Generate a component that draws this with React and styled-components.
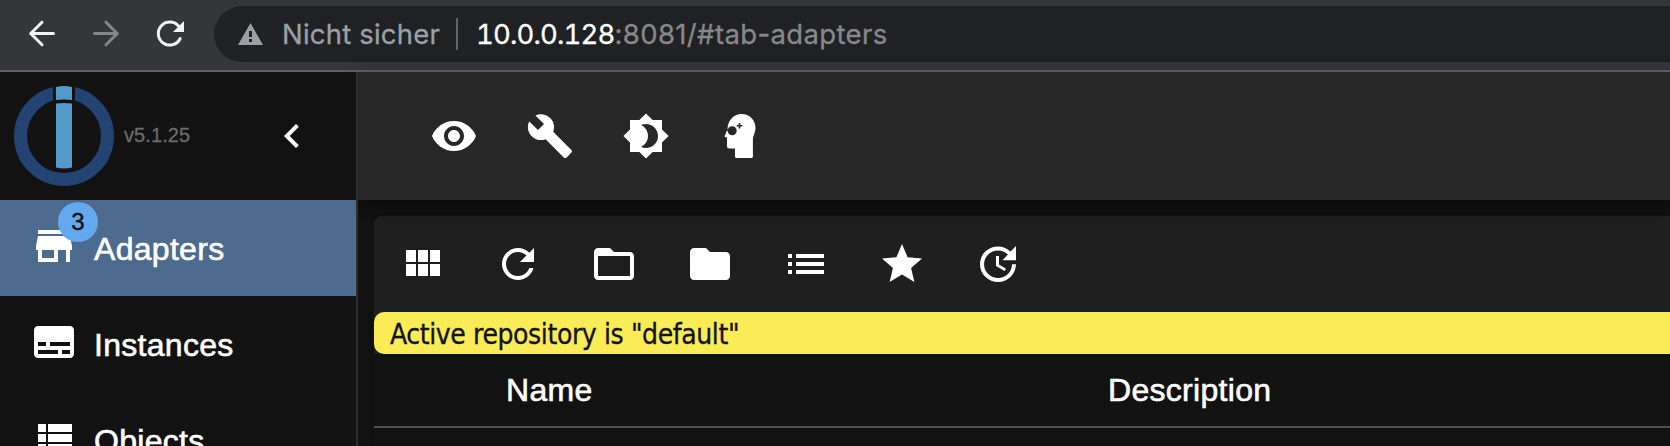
import React from "react";
import styled, { createGlobalStyle } from "styled-components";

const GlobalStyle = createGlobalStyle`
  * { box-sizing: border-box; }
  html, body { margin: 0; background: #121212; overflow: hidden; }
  body { font-family: "Liberation Sans", Arial, sans-serif; color: #fff; }
`;

const Page = styled.div`
  display: flex;
  flex-direction: column;
  width: 100%;
  height: 446px;
  overflow: hidden;
`;

const BrowserBar = styled.div`
  display: flex;
  flex: none;
  height: 72px;
  padding-top: 6px;
  background: #35363a;
  border-bottom: 2px solid #5f5f64;
`;

const NavButtons = styled.div`
  display: flex;
  align-items: center;
  width: 214px;
  height: 56px;
  padding-left: 22px;
  gap: 24px;
`;

const NavIcon = styled.svg`
  flex: none;
  width: 40px;
  height: 40px;
  fill: none;
  stroke: ${(p) => p.$color};
  stroke-width: 3;
  stroke-linecap: round;
  stroke-linejoin: round;
`;

const AddressBar = styled.div`
  display: flex;
  align-items: center;
  flex: 1;
  height: 56px;
  padding-left: 24px;
  border-radius: 28px 0 0 28px;
  background: #202124;
  font-family: Inter, sans-serif;
  font-size: 27.5px;
  color: #9aa0a6;
  white-space: nowrap;
`;

const WarningIcon = styled.svg`
  width: 25px;
  height: 22px;
  margin-right: 19px;
`;

const SecurityLabel = styled.span`
  width: 174px;
  letter-spacing: 0.2px;
  -webkit-text-stroke: 0.3px #9aa0a6;
`;

const Divider = styled.span`
  width: 2px;
  height: 32px;
  margin-right: 18px;
  background: #5f6367;
`;

const Url = styled.span`
  color: #87888a;
  letter-spacing: 0.37px;
  -webkit-text-stroke: 0.3px currentColor;
`;

const Host = styled.span`
  color: #fff;
  letter-spacing: -0.85px;
  font-variant-numeric: tabular-nums;
`;

const Body = styled.div`
  display: flex;
  flex: 1;
  min-height: 0;
`;

const Sidebar = styled.aside`
  position: relative;
  z-index: 1;
  flex: none;
  width: 358px;
  background: #121212;
  border-right: 2px solid #2e2e2e;
`;

const Brand = styled.div`
  display: flex;
  align-items: center;
  height: 128px;
  padding-left: 14px;
`;

const Logo = styled.svg`
  width: 100px;
  height: 100px;
`;

const Version = styled.span`
  width: 144px;
  margin: -1px 0 0 10px;
  font-size: 20px;
  letter-spacing: 0.1px;
  color: #6b6b6b;
  -webkit-text-stroke: 0.3px #6b6b6b;
`;

const MaterialSvg = styled.svg`
  flex: none;
  display: block;
  width: 48px;
  height: 48px;
  fill: #fff;
`;

const MenuItem = styled.div`
  display: flex;
  align-items: center;
  height: 96px;
  padding: 0 0 4px 30px;
  background: ${(p) => (p.$active ? "#4d6b8f" : "transparent")};
`;

const IconSlot = styled.div`
  position: relative;
  width: 64px;
`;

const Badge = styled.span`
  position: absolute;
  top: -20px;
  left: 28px;
  width: 40px;
  height: 40px;
  border-radius: 50%;
  background: #64a8f0;
  color: #121212;
  font-size: 24px;
  line-height: 40px;
  text-align: center;
  -webkit-text-stroke: 0.4px #121212;
`;

const MenuLabel = styled.span`
  padding-top: 5px;
  font-size: 32px;
  line-height: 48px;
  letter-spacing: 0.3px;
  -webkit-text-stroke: 0.6px #fff;
`;

const Main = styled.main`
  display: flex;
  flex-direction: column;
  flex: 1;
  min-width: 0;
`;

const Header = styled.header`
  position: relative;
  display: flex;
  align-items: center;
  flex: none;
  gap: 48px;
  height: 128px;
  padding-left: 72px;
  background: #272727;
  box-shadow: 0 4px 8px -2px rgba(0, 0, 0, 0.2), 0 8px 10px rgba(0, 0, 0, 0.14), 0 2px 20px rgba(0, 0, 0, 0.12);
`;

const Panel = styled.section`
  flex: 1;
  margin: 16px 0 0 16px;
  border-radius: 8px 0 0 0;
  background: #121212;
  box-shadow: 0 4px 2px -2px rgba(0, 0, 0, 0.2), 0 2px 2px rgba(0, 0, 0, 0.14), 0 2px 6px rgba(0, 0, 0, 0.12);
`;

const Toolbar = styled.div`
  display: flex;
  align-items: center;
  gap: 48px;
  height: 96px;
  padding-left: 24px;
  border-radius: 8px 0 0 0;
  background: #1f1f1f;
`;

const NoticeWrap = styled.div`
  background: #1f1f1f;
`;

const Notice = styled.div`
  height: 42px;
  padding: 2px 0 0 16px;
  border-radius: 10px 0 0 10px;
  background: #faec56;
  color: #121212;
  font-family: "DejaVu Sans Condensed", "DejaVu Sans", sans-serif;
  font-stretch: condensed;
  font-size: 28px;
  letter-spacing: -0.4px;
  line-height: 42px;
  white-space: nowrap;
  -webkit-text-stroke: 0.3px #121212;
`;

const TableHead = styled.div`
  display: grid;
  grid-template-columns: 132px 602px 1fr;
  align-items: center;
  height: 74px;
  border-bottom: 2px solid #515151;
`;

const HeadCell = styled.span`
  font-size: 32px;
  letter-spacing: 0.3px;
  -webkit-text-stroke: 0.6px #fff;
`;

const PATHS = {
  eye: "M12 4.5C7 4.5 2.73 7.61 1 12c1.73 4.39 6 7.5 11 7.5s9.27-3.11 11-7.5c-1.73-4.39-6-7.5-11-7.5zM12 17c-2.76 0-5-2.24-5-5s2.24-5 5-5 5 2.24 5 5-2.24 5-5 5zm0-8c-1.66 0-3 1.34-3 3s1.34 3 3 3 3-1.34 3-3-1.34-3-3-3z",
  wrench: "M22.7 19l-9.1-9.1c.9-2.3.4-5-1.5-6.9-2-2-5-2.4-7.4-1.3L9 6 6 9 1.6 4.7C.4 7.1.9 10.1 2.9 12.1c1.9 1.9 4.6 2.4 6.9 1.5l9.1 9.1c.4.4 1 .4 1.4 0l2.3-2.3c.5-.4.5-1.1.1-1.4z",
  brightness: "M20 8.69V4h-4.69L12 .69 8.69 4H4v4.69L.69 12 4 15.31V20h4.69L12 23.31 15.31 20H20v-4.69L23.31 12 20 8.69zM12 18c-.89 0-1.74-.2-2.5-.55C11.56 16.5 13 14.42 13 12s-1.44-4.5-3.5-5.45C10.26 6.2 11.11 6 12 6c3.31 0 6 2.69 6 6s-2.69 6-6 6z",
  chevron: "M15.41 7.41L14 6l-6 6 6 6 1.41-1.41L10.83 12z",
  store: "M20 4H4v2h16V4zm1 10v-2l-1-5H4l-1 5v2h1v6h10v-6h4v6h2v-6h1zm-9 4H6v-4h6v4z",
  subtitles: "M20 4H4c-1.1 0-2 .9-2 2v12c0 1.1.9 2 2 2h16c1.1 0 2-.9 2-2V6c0-1.1-.9-2-2-2zM4 12h4v2H4v-2zm10 6H4v-2h10v2zm6 0h-4v-2h4v2zm0-4H10v-2h10v2z",
  viewList: "M4 14h4v-4H4v4zm0 5h4v-4H4v4zM4 9h4V5H4v4zm5 5h12v-4H9v4zm0 5h12v-4H9v4zM9 5v4h12V5H9z",
  modules: "M4 11h5V5H4v6zm0 7h5v-6H4v6zm6 0h5v-6h-5v6zm6 0h5v-6h-5v6zm-6-7h5V5h-5v6zm6-6v6h5V5h-5z",
  refresh: "M17.65 6.35C16.2 4.9 14.21 4 12 4c-4.42 0-7.99 3.58-7.99 8s3.57 8 7.99 8c3.73 0 6.84-2.55 7.73-6h-2.08c-.82 2.33-3.04 4-5.65 4-3.31 0-6-2.69-6-6s2.69-6 6-6c1.66 0 3.14.69 4.22 1.78L13 11h7V4l-2.35 2.35z",
  folderOpen: "M20 6h-8l-2-2H4c-1.1 0-1.99.9-1.99 2L2 18c0 1.1.9 2 2 2h16c1.1 0 2-.9 2-2V8c0-1.1-.9-2-2-2zm0 12H4V8h16v10z",
  folder: "M10 4H4c-1.1 0-1.99.9-1.99 2L2 18c0 1.1.9 2 2 2h16c1.1 0 2-.9 2-2V8c0-1.1-.9-2-2-2h-8l-2-2z",
  list: "M3 13h2v-2H3v2zm0 4h2v-2H3v2zm0-8h2V7H3v2zm4 4h14v-2H7v2zm0 4h14v-2H7v2zM7 7v2h14V7H7z",
  star: "M12 17.27L18.18 21l-1.64-7.03L22 9.24l-7.19-.61L12 2 9.19 8.63 2 9.24l5.46 4.73L5.82 21z",
  update: "M21 10.12h-6.78l2.74-2.82c-2.73-2.7-7.15-2.8-9.88-.1-2.73 2.71-2.73 7.08 0 9.79s7.15 2.71 9.88 0C18.32 15.65 19 14.08 19 12.1h2c0 1.98-.88 4.55-2.64 6.29-3.51 3.48-9.21 3.48-12.72 0-3.5-3.47-3.53-9.11-.02-12.58s9.14-3.47 12.65 0L21 3v7.12zM12.5 8v4.25l3.5 2.08-.72 1.21L11 13V8h1.5z",
};

const MaterialIcon = ({ name }) => (
  <MaterialSvg viewBox="0 0 24 24">
    <path d={PATHS[name]} />
  </MaterialSvg>
);

const ExpertIcon = () => (
  <MaterialSvg viewBox="0 0 48 48">
    <path d="M9.500 17.500C9.500 8.500 15.500 2 23.500 2C31.500 2 37.500 8 37.500 16C37.500 20.500 35 23.500 34.900 27V44.500Q34.900 46 33.400 46H18.500Q17 46 17 44.500V36.500H11.500Q9 36.500 9 34V25.300H7.500Q6 25.300 6.800 23.700L9 18.500Z" />
    <circle cx="14.200" cy="18.700" r="4.500" fill="#272727" />
    <path d="M6.500 18H12M21.500 11V16.600M18.700 13.800H24.300" stroke="#272727" strokeWidth="1.600" />
  </MaterialSvg>
);

const menu = [
  { label: "Adapters", icon: "store", badge: 3, active: true },
  { label: "Instances", icon: "subtitles" },
  { label: "Objects", icon: "viewList" },
];

const tools = ["modules", "refresh", "folderOpen", "folder", "list", "star", "update"];

export default function App() {
  return (
    <Page>
      <GlobalStyle />
      <BrowserBar>
        <NavButtons>
          <NavIcon viewBox="0 0 40 40" $color="#f1f3f4">
            <path d="M31.500 19.500H8.700M20 8.200L8.700 19.500L20 30.800" />
          </NavIcon>
          <NavIcon viewBox="0 0 40 40" $color="#85868a">
            <path d="M8.500 19.500H31.300M20 8.200L31.300 19.500L20 30.800" />
          </NavIcon>
          <NavIcon viewBox="0 0 40 40" $color="#f1f3f4">
            <path d="M30.200 24.500A11.500 11.500 0 1 1 28.500 12" />
            <path d="M34 7V18H23Z" fill="#f1f3f4" stroke="none" />
          </NavIcon>
        </NavButtons>
        <AddressBar>
          <WarningIcon viewBox="0 0 25 22">
            <path d="M12.500 0L25 22H0Z" fill="#9aa0a6" />
            <path d="M11 8h3v6h-3zM11 16h3v3h-3z" fill="#202124" />
          </WarningIcon>
          <SecurityLabel>Nicht sicher</SecurityLabel>
          <Divider />
          <Url>
            <Host>10.0.0.128</Host>:8081/#tab-adapters
          </Url>
        </AddressBar>
      </BrowserBar>
      <Body>
        <Sidebar>
          <Brand>
            <Logo viewBox="0 0 100 100">
              <circle cx="50" cy="50" r="43.500" fill="none" stroke="#234372" strokeWidth="13" />
              <path d="M39 0H61V18H39Z" fill="#121212" />
              <path d="M42 1Q50 -1 58 1V14Q50 13 42 14Z" fill="#5398c8" />
              <path d="M42 17.500Q50 16.500 58 17.500V81.500Q50 83.500 42 81.500Z" fill="#5398c8" />
            </Logo>
            <Version>v5.1.25</Version>
            <MaterialIcon name="chevron" />
          </Brand>
          {menu.map((item) => (
            <MenuItem key={item.label} $active={item.active}>
              <IconSlot>
                <MaterialIcon name={item.icon} />
                {item.badge && <Badge>{item.badge}</Badge>}
              </IconSlot>
              <MenuLabel>{item.label}</MenuLabel>
            </MenuItem>
          ))}
        </Sidebar>
        <Main>
          <Header>
            <MaterialIcon name="eye" />
            <MaterialIcon name="wrench" />
            <MaterialIcon name="brightness" />
            <ExpertIcon />
          </Header>
          <Panel>
            <Toolbar>
              {tools.map((name) => (
                <MaterialIcon key={name} name={name} />
              ))}
            </Toolbar>
            <NoticeWrap>
              <Notice>Active repository is "default"</Notice>
            </NoticeWrap>
            <TableHead>
              <span />
              <HeadCell>Name</HeadCell>
              <HeadCell>Description</HeadCell>
            </TableHead>
          </Panel>
        </Main>
      </Body>
    </Page>
  );
}
